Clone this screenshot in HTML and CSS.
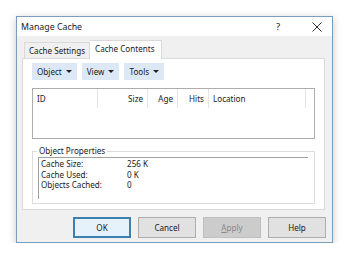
FILE: index.html
```html
<!DOCTYPE html>
<html lang="en">
<head>
    <meta charset="UTF-8">
    <title>Manage Cache</title>
    <link rel="stylesheet" href="styles.css">
</head>
<body>
<div class="window">
    <div class="titlebar">
        <span class="title">Manage Cache</span>
        <span class="help">?</span>
        <span class="close">
            <svg width="10" height="10" viewBox="0 0 10 10"><path d="M0.5 0.5L9.5 9.5M9.5 0.5L0.5 9.5" stroke="#333" stroke-width="1"/></svg>
        </span>
    </div>
    <div class="client">
        <!-- tabs -->
        <div class="tabs">
            <div class="tab">Cache Settings</div>
            <div class="tab active">Cache Contents</div>
        </div>
        <div class="panel">
            <div class="toolbar">
                <span class="menu">Object <i class="caret"></i></span>
                <span class="menu">View <i class="caret"></i></span>
                <span class="menu">Tools <i class="caret"></i></span>
            </div>
            <div class="list">
                <div class="list-head">
                    <span class="col col-id">ID</span>
                    <span class="col col-size">Size</span>
                    <span class="col col-age">Age</span>
                    <span class="col col-hits">Hits</span>
                    <span class="col col-loc">Location</span>
                    <span class="col col-rest"></span>
                </div>
            </div>
            <!-- object properties -->
            <div class="group">
                <span class="legend">Object Properties</span>
                <div class="props">
                    <div class="prop"><span class="key">Cache Size:</span><span>256 K</span></div>
                    <div class="prop"><span class="key">Cache Used:</span><span>0 K</span></div>
                    <div class="prop"><span class="key">Objects Cached:</span><span>0</span></div>
                </div>
            </div>
        </div>
        <div class="buttons">
            <span class="btn default">OK</span>
            <span class="btn">Cancel</span>
            <span class="btn disabled"><u>A</u>pply</span>
            <span class="btn">Help</span>
        </div>
    </div>
</div>
</body>
</html>
```
FILE: styles.css
```css
body{
    margin: 0;
    background: #fff;
    font-family: "Noto Sans", "Open Sans", sans-serif;
    font-size: 8.1px;
    color: #1a1a1a;
}
.window{
    margin: 16px 0 0 16px;
    width: 315px;
    height: 225px;
    border: 1px solid #7a9cbd;
    box-shadow: 0 2px 8px rgba(0,0,0,0.22);
    display: flex;
    flex-direction: column;
    background: #f0f0f0;
}
.titlebar{
    height: 19px;
    background: #fff;
    display: flex;
    align-items: center;
    padding-left: 4px;
}
.titlebar .title{
    flex: 1;
    font-size: 8.8px;
    color: #222;
}
.titlebar .help{
    width: 36px;
    font-size: 9.5px;
}
.titlebar .close{
    width: 20px;
    display: flex;
}
.client{
    flex: 1;
    padding: 4px 7px 0 5px;
    display: flex;
    flex-direction: column;
}
.tabs{
    display: flex;
    height: 18px;
    align-items: flex-end;
    padding-left: 2px;
}
.tab{
    height: 16px;
    line-height: 15px;
    padding: 0 4px;
    border: 1px solid #d9d9d9;
    border-bottom: none;
    box-sizing: border-box;
}
.tab.active{
    height: 19px;
    line-height: 16px;
    padding: 0 6px 0 5px;
    background: #fff;
    margin-bottom: -1px;
    position: relative;
    z-index: 1;
    border-left: none;
}
.panel{
    height: 152px;
    background: #fff;
    border: 1px solid #d9d9d9;
    padding: 4px 9px 0 9px;
    box-sizing: border-box;
}
.toolbar{
    display: flex;
    gap: 5px;
}
.menu{
    background: #dce8f5;
    height: 17px;
    line-height: 16px;
    padding: 0 5px 0 5px;
    display: flex;
    align-items: center;
    gap: 4px;
}
.caret{
    width: 0;
    height: 0;
    border-left: 3px solid transparent;
    border-right: 3px solid transparent;
    border-top: 3px solid #222;
}
.list{
    margin-top: 8px;
    height: 51px;
    border: 1px solid #adadad;
    box-sizing: border-box;
}
.list-head{
    display: flex;
    height: 19px;
    line-height: 19px;
}
.col{
    border-right: 1px solid #e5e5e5;
    padding: 0 4px;
    box-sizing: border-box;
}
.col-id{ width: 65px; }
.col-size{ width: 50px; text-align: right; }
.col-age{ width: 30px; text-align: right; }
.col-hits{ width: 31px; text-align: right; }
.col-loc{ width: 97px; }
.col-rest{ flex: 1; border-right: none; }
.group{
    margin-top: 12px;
    border: 1px solid #dcdcdc;
    height: 53px;
    position: relative;
    padding: 5px 6px 0 5px;
    box-sizing: border-box;
}
.legend{
    position: absolute;
    top: -7px;
    left: 4px;
    background: #fff;
    padding: 0 2px;
    line-height: 12px;
}
.props{
    border-top: 1px solid #a0a0a0;
    border-left: 1px solid #a0a0a0;
    height: 40px;
    padding: 1px 0 0 2px;
}
.prop{
    display: flex;
    line-height: 10.5px;
}
.prop .key{
    width: 86px;
}
.buttons{
    display: flex;
    justify-content: flex-end;
    gap: 7px;
    margin-top: 7px;
    margin-right: -1px;
}
.btn{
    width: 58px;
    height: 21px;
    line-height: 19px;
    text-align: center;
    background: #e1e1e1;
    border: 1px solid #adadad;
    box-sizing: border-box;
}
.btn.default{
    border: 2px solid #3c7fb1;
    line-height: 17px;
    background: #e5f1fb;
}
.btn.disabled{
    background: #cccccc;
    border-color: #bfbfbf;
    color: #8a8a8a;
}
```
